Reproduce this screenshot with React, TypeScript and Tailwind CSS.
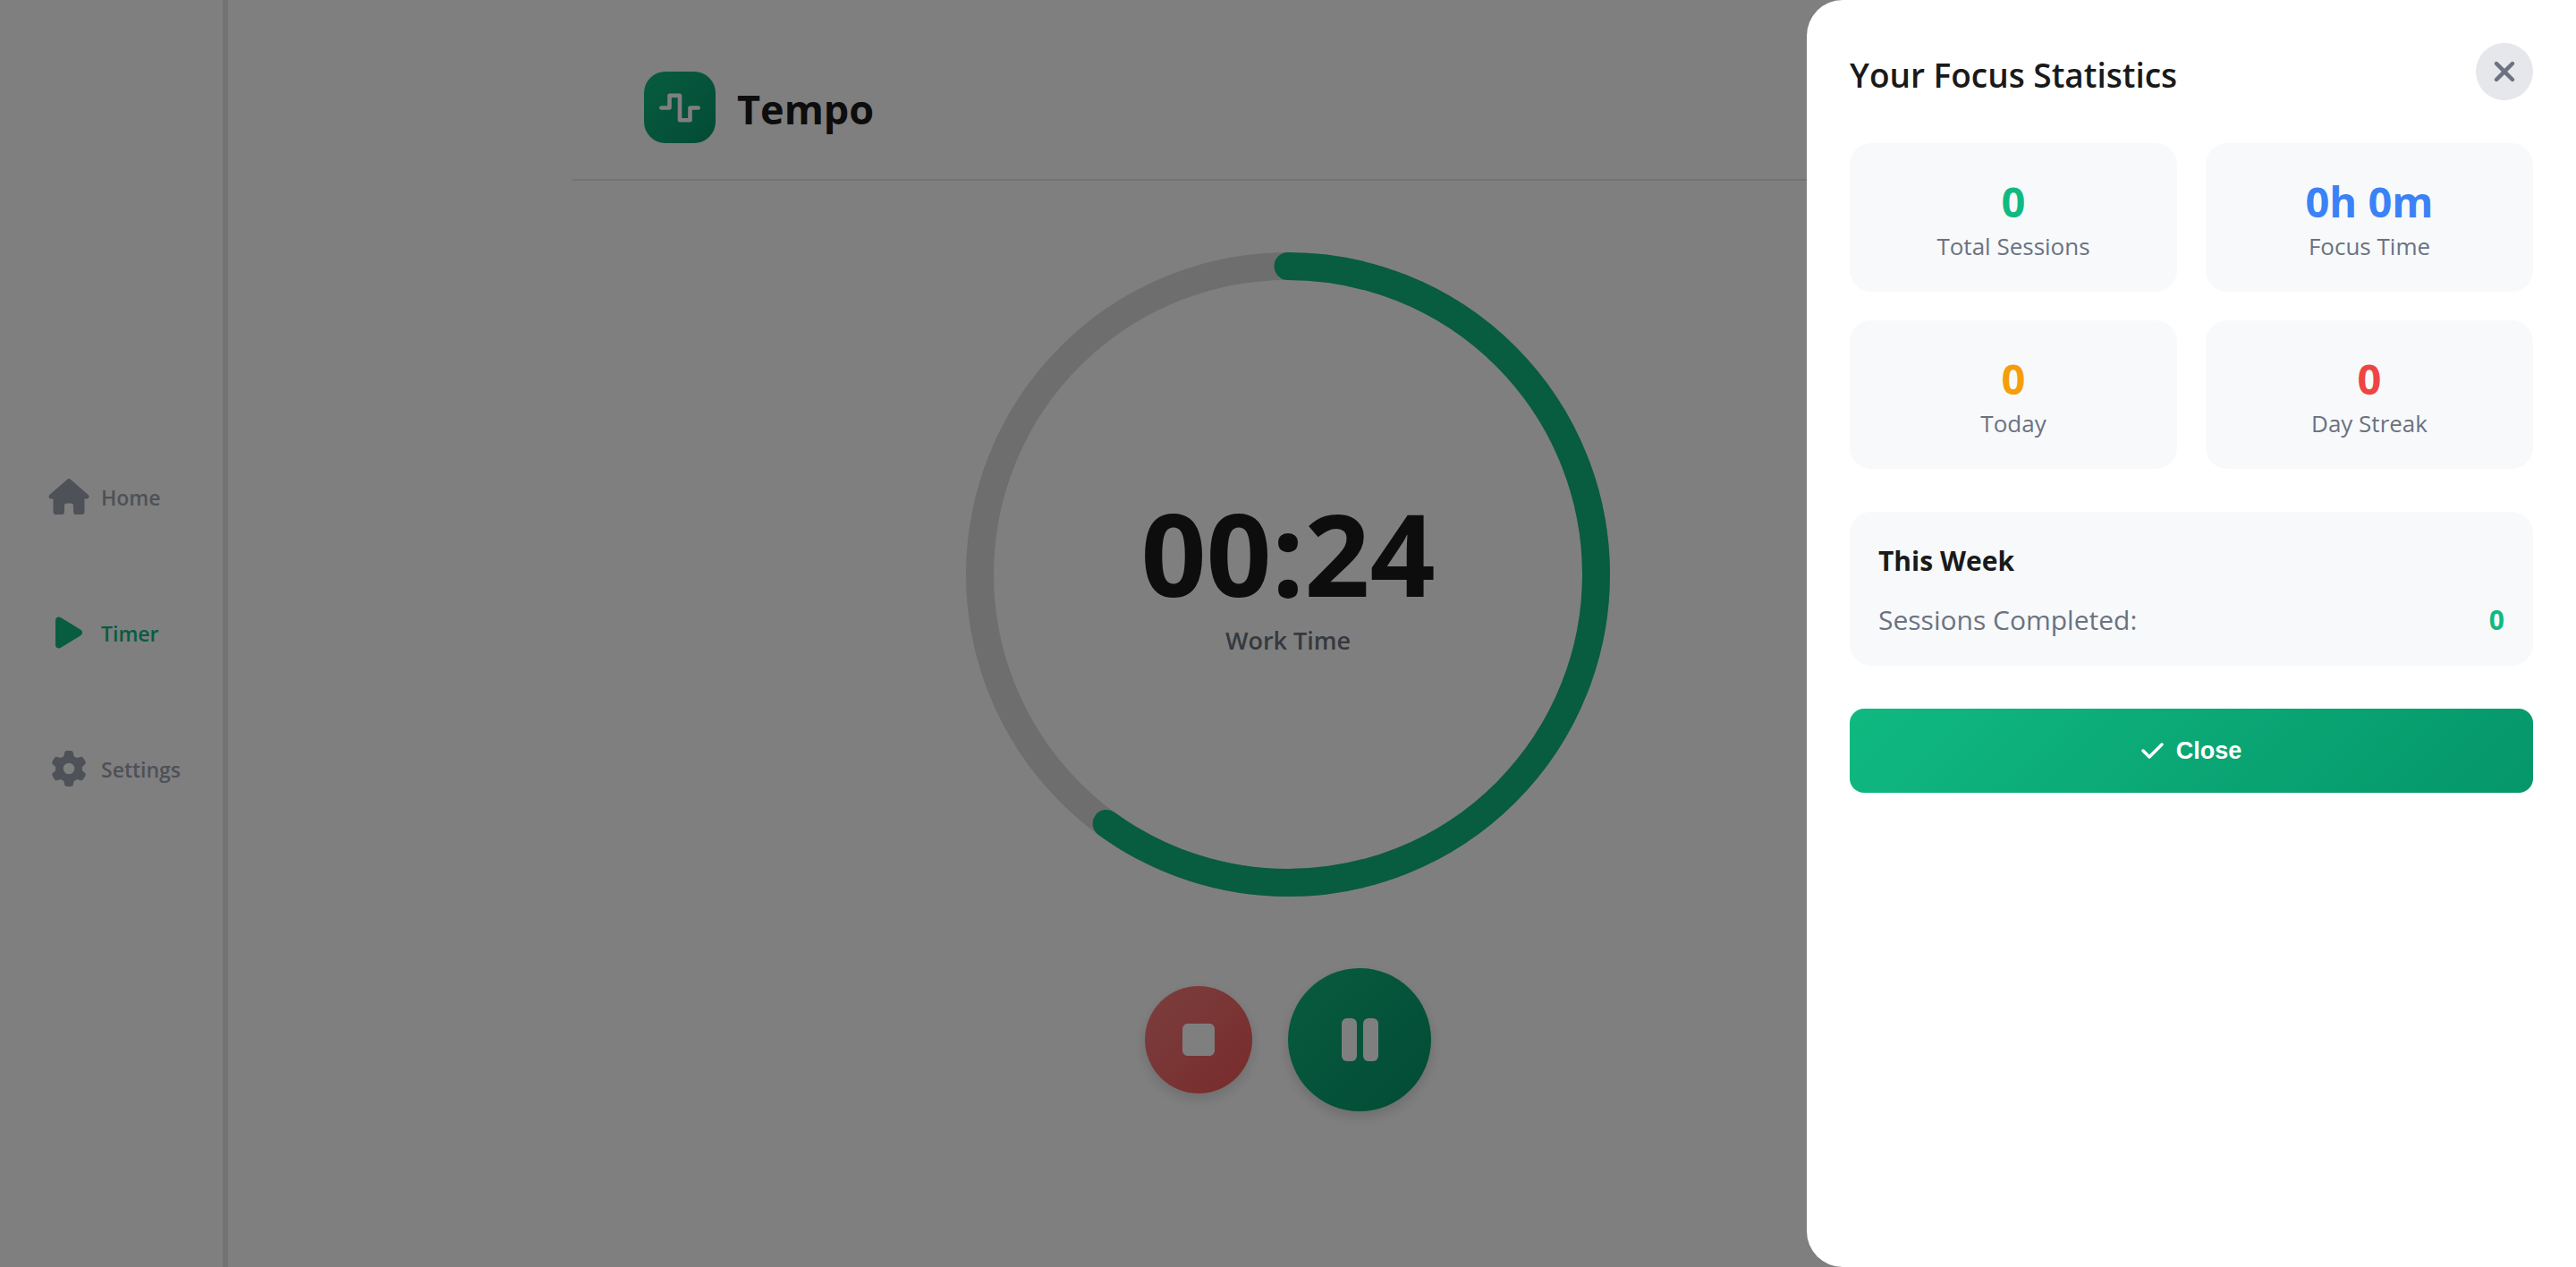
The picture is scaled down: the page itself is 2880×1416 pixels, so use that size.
import { FaCheck, FaGear, FaHouse, FaPlay, FaStop, FaWaveSquare, FaXmark } from "react-icons/fa6";
import type { ReactNode } from "react";

const RADIUS = 344.5;
const CIRCUMFERENCE = 2 * Math.PI * RADIUS;
const PROGRESS = 0.6;

function NavItem({ icon, label, active = false }: { icon: ReactNode; label: string; active?: boolean }) {
  return (
    <a
      href="#"
      aria-current={active ? "page" : undefined}
      className={`flex h-[72px] items-center gap-3 text-[23px] font-semibold ${active ? "text-[#10b981]" : "text-[#9ca3af]"}`}
    >
      <span className="flex w-12 justify-center">{icon}</span>
      <span className="pt-0.5">{label}</span>
    </a>
  );
}

function Sidebar() {
  return (
    <nav className="flex w-[255px] shrink-0 flex-col justify-center gap-20 border-r-6 border-[#e5e7eb] pb-0.5 pl-[53px]">
      <NavItem icon={<FaHouse className="h-10 w-[46px]" />} label="Home" />
      <NavItem icon={<FaPlay className="h-10 w-[30px]" />} label="Timer" active />
      <NavItem icon={<FaGear className="size-10" />} label="Settings" />
    </nav>
  );
}

function TimerDial() {
  return (
    <div className="grid size-[720px] place-items-center">
      <svg viewBox="0 0 720 720" className="col-start-1 row-start-1 size-full -rotate-90" aria-hidden="true">
        <circle cx="360" cy="360" r={RADIUS} fill="none" stroke="#dcdcdc" strokeWidth="31" />
        <circle
          cx="360"
          cy="360"
          r={RADIUS}
          fill="none"
          stroke="#10b981"
          strokeWidth="31"
          strokeLinecap="round"
          strokeDasharray={CIRCUMFERENCE}
          strokeDashoffset={CIRCUMFERENCE * (1 - PROGRESS)}
        />
      </svg>
      <div className="col-start-1 row-start-1 flex flex-col items-center pb-3">
        <span className="text-[128px] leading-[160px] font-bold text-[#1a1a1a]">00:24</span>
        <span className="text-[27px] leading-9 font-semibold text-[#6b7280]">Work Time</span>
      </div>
    </div>
  );
}

function PauseIcon() {
  return (
    <svg viewBox="0 0 41 48" className="h-12 w-[41px]" fill="currentColor" aria-hidden="true">
      <rect x="0" y="0" width="17" height="48" rx="6" />
      <rect x="24" y="0" width="17" height="48" rx="6" />
    </svg>
  );
}

function StatCard({ value, label, color }: { value: string; label: string; color: string }) {
  return (
    <div className="flex flex-col items-center rounded-3xl bg-[#f8f9fb] px-6 py-[33px]">
      <span className={`text-[47px] leading-[64px] font-bold ${color}`}>{value}</span>
      <span className="text-[26px] leading-9 text-[#6b7280]">{label}</span>
    </div>
  );
}

function StatsDrawer() {
  return (
    <section
      role="dialog"
      aria-labelledby="stats-title"
      className="flex h-full w-[860px] max-w-full flex-col gap-12 rounded-l-[40px] bg-white p-12"
    >
      <header className="flex items-center justify-between">
        <h2 id="stats-title" className="pt-2 text-[37px] leading-[56px] font-semibold text-[#1a1a1a]">
          Your Focus Statistics
        </h2>
        <button type="button" aria-label="Close statistics" className="grid size-16 place-items-center rounded-full bg-[#e5e7eb] text-[#6b7280]">
          <FaXmark className="size-9" />
        </button>
      </header>
      <div className="grid grid-cols-2 gap-8">
        <StatCard value="0" label="Total Sessions" color="text-[#10b981]" />
        <StatCard value="0h 0m" label="Focus Time" color="text-[#3b82f6]" />
        <StatCard value="0" label="Today" color="text-[#f59e0b]" />
        <StatCard value="0" label="Day Streak" color="text-[#ef4444]" />
      </div>
      <div className="flex flex-col gap-6 rounded-3xl bg-[#f8f9fb] px-8 pt-[34px] pb-[30px]">
        <h3 className="text-[30px] leading-[42px] font-bold text-[#1a1a1a]">This Week</h3>
        <p className="flex justify-between text-[30px] leading-[42px] text-[#6b7280]">
          <span>Sessions Completed:</span>
          <strong className="font-bold text-[#10b981]">0</strong>
        </p>
      </div>
      <button
        type="button"
        className="flex h-[94px] items-center justify-center gap-[14px] rounded-2xl bg-[linear-gradient(135deg,#10b981,#059669)] font-['Liberation_Sans',Arial,sans-serif] text-[27px] font-bold text-white"
      >
        <FaCheck className="h-7 w-[25px]" />
        Close
      </button>
    </section>
  );
}

export default function App() {
  return (
    <div className="flex min-h-screen bg-white font-['Open_Sans','Noto_Sans',sans-serif]">
      <Sidebar />
      <main className="flex-1 pr-[255px]">
        <div className="mx-auto max-w-[1600px]">
          <header className="flex items-center gap-6 border-b-2 border-[#e5e7eb] px-20 pt-20 pb-10">
            <div className="grid size-20 place-items-center rounded-3xl bg-[linear-gradient(135deg,#10b981,#059669)] text-white">
              <FaWaveSquare className="h-[37px] w-[46px]" />
            </div>
            <h1 className="pt-1 text-[45px] leading-[64px] font-bold text-[#1a1a1a]">Tempo</h1>
          </header>
          <div className="flex flex-col items-center gap-20 pt-20">
            <TimerDial />
            <div className="flex items-center gap-10">
              <button
                type="button"
                aria-label="Stop"
                className="grid size-[120px] place-items-center rounded-full bg-[linear-gradient(135deg,#f87171,#ef4444)] text-white opacity-90 shadow-[0_6px_14px_rgba(0,0,0,0.15)]"
              >
                <FaStop className="h-12 w-9" />
              </button>
              <button
                type="button"
                aria-label="Pause"
                className="grid size-40 place-items-center rounded-full bg-[linear-gradient(135deg,#10b981,#059669)] text-white shadow-[0_6px_14px_rgba(0,0,0,0.15)]"
              >
                <PauseIcon />
              </button>
            </div>
          </div>
        </div>
      </main>
      <div className="fixed inset-0 flex justify-end bg-black/50">
        <StatsDrawer />
      </div>
    </div>
  );
}
